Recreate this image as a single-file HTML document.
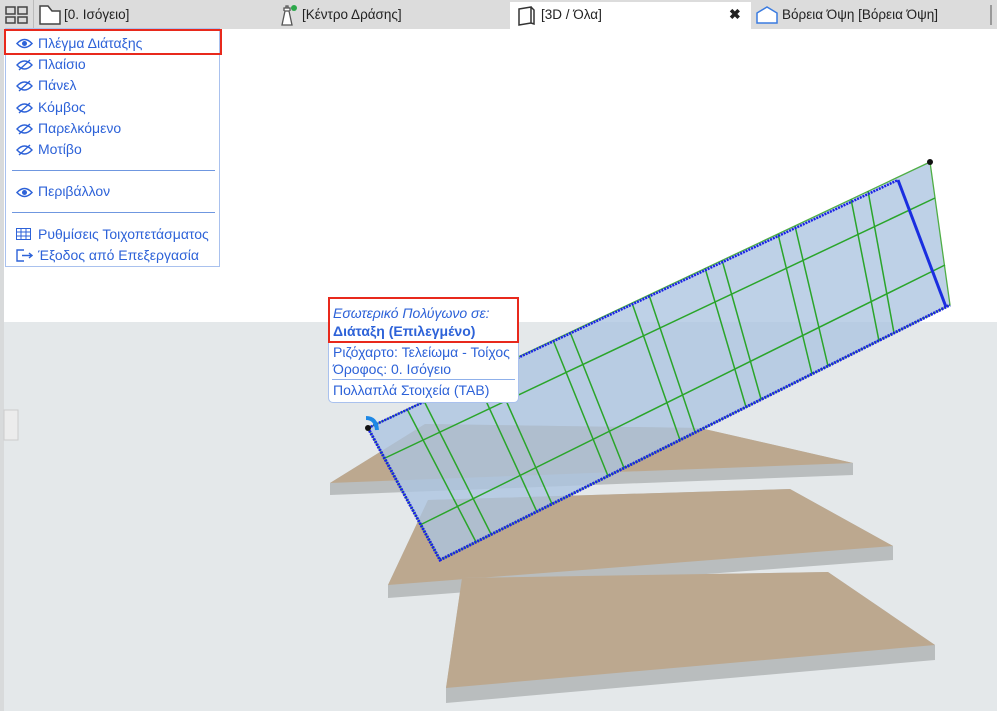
<!DOCTYPE html>
<html><head><meta charset="utf-8"><style>
*{margin:0;padding:0;box-sizing:border-box}
body{width:997px;height:711px;overflow:hidden;background:#fff;font-family:"Liberation Sans","Noto Sans CJK SC",sans-serif;position:relative}
.tabs{position:absolute;left:0;top:0;width:997px;height:29px;background:#dcdcdc;font-size:13.5px;color:#222}
.tab{position:absolute;top:7px;white-space:nowrap}
.menu{position:absolute;left:5px;top:28px;width:215px;height:239px;background:#fff;border:1px solid #a9c1ee;font-size:14px;color:#2d62d8}
.it{position:absolute;left:32px;white-space:nowrap}
.ic{position:absolute;left:10px}
.sep{position:absolute;left:6px;width:203px;height:1px;background:#6f97e0}
.red{position:absolute;border:2px solid #e8291c}
.tip{position:absolute;left:328px;top:297px;width:191px;height:106px;background:#fff;border:1px solid #a9c1ee;border-radius:5px;font-size:14px;color:#2d62d8}
.tip div{position:absolute;left:4px;white-space:nowrap}
</style></head><body>
<svg style="position:absolute;left:0;top:0" width="997" height="711">
<rect x="0" y="322" width="997" height="389" fill="#e4e8ea"/>
<rect x="0" y="29" width="4" height="682" fill="#d8dadb"/>
<rect x="4" y="410" width="14" height="30" fill="#ececec" stroke="#ccc"/>
<polygon points="330,483 425,424 700,428 853,463 853,475 330,495" fill="#b9bdbe"/>
<polygon points="330,483 425,424 700,428 853,463" fill="#bca88f"/>
<polygon points="388,585 428,500 790,489 893,546 893,560 388,598" fill="#b9bdbe"/>
<polygon points="388,585 428,500 790,489 893,546" fill="#bca88f"/>
<polygon points="446,688 462,578 828,572 935,645 935,660 446,703" fill="#b9bdbe"/>
<polygon points="446,688 462,578 828,572 935,645" fill="#bca88f"/>
<polygon points="368,428 930,162 950,305 440,560" fill="rgba(172,196,224,0.78)" stroke="#4fae45" stroke-width="1.3"/>
<g stroke="#2aa52a" stroke-width="1.5">
<line x1="407" y1="409" x2="476" y2="542"/><line x1="424" y1="401" x2="491" y2="534"/>
<line x1="475" y1="377" x2="537" y2="512"/><line x1="492" y1="369" x2="552" y2="504"/>
<line x1="553" y1="340" x2="608" y2="476"/><line x1="570" y1="332" x2="624" y2="468"/>
<line x1="632" y1="303" x2="680" y2="440"/><line x1="649" y1="295" x2="695" y2="432"/>
<line x1="705" y1="268" x2="746" y2="407"/><line x1="722" y1="260" x2="761" y2="399"/>
<line x1="778" y1="234" x2="812" y2="374"/><line x1="795" y1="226" x2="828" y2="366"/>
<line x1="851" y1="199" x2="879" y2="341"/><line x1="868" y1="191" x2="894" y2="333"/>
<line x1="383" y1="459" x2="935" y2="198"/><line x1="420" y1="525" x2="945" y2="265"/>
</g>
<line x1="898" y1="180" x2="946" y2="307" stroke="#1a2ee0" stroke-width="3"/>
<polyline points="368,428 440,560 950,305" fill="none" stroke="#1a22e6" stroke-width="3" stroke-dasharray="2 1"/>
<line x1="368" y1="428" x2="898" y2="180" stroke="#1a22e6" stroke-width="2.5" stroke-dasharray="2 1"/>
<circle cx="930" cy="162" r="3" fill="#111"/><circle cx="368" cy="428" r="3" fill="#111"/>
<path d="M366,418 q10,0 11,12" stroke="#1e88e5" stroke-width="4" fill="none"/>
</svg>
<div class="tabs">
<svg style="position:absolute;left:5px;top:6px" width="24" height="18"><g fill="none" stroke="#444" stroke-width="1.5"><rect x="1" y="1" width="9" height="7"/><rect x="13" y="1" width="9" height="7"/><rect x="1" y="11" width="9" height="6"/><rect x="13" y="11" width="9" height="6"/></g></svg>
<div style="position:absolute;left:33px;top:0;width:1px;height:29px;background:#bbb"></div>
<svg style="position:absolute;left:39px;top:5px" width="22" height="20"><path d="M1,1 h8 l4,5 h8 v13 h-20 z" fill="#fff" stroke="#444" stroke-width="1.5"/></svg>
<div class="tab" style="left:64px">[0. Ισόγειο]</div>
<svg style="position:absolute;left:277px;top:4px" width="20" height="22"><path d="M5,21 l3,-14 h4 l3,14 z M7,7 v-3 h6 v3 M9,4 v-2 h2 v2" fill="#fff" stroke="#555" stroke-width="1.3"/><circle cx="17" cy="4" r="3" fill="#2ca84a"/></svg>
<div class="tab" style="left:302px">[Κέντρο Δράσης]</div>
<div style="position:absolute;left:510px;top:2px;width:241px;height:27px;background:#fff"></div>
<svg style="position:absolute;left:517px;top:5px" width="20" height="22"><path d="M2,4 l12,-2 v16 l-12,2 z M14,2 l3,3 v14 l-3,-1" fill="none" stroke="#333" stroke-width="1.5"/></svg>
<div class="tab" style="left:541px">[3D / Όλα]</div>
<div class="tab" style="left:729px;font-weight:bold;font-size:14px;top:6px">✖</div>
<svg style="position:absolute;left:756px;top:6px" width="22" height="18"><path d="M1,7 l10,-6 l10,6 v10 h-20 z" fill="#fff" stroke="#3a7be0" stroke-width="1.5"/></svg>
<div class="tab" style="left:782px">Βόρεια Όψη [Βόρεια Όψη]</div>
<div style="position:absolute;left:990px;top:5px;width:2px;height:20px;background:#999"></div>
</div>
<div class="menu">
<svg class="ic" style="top:9px" width="17" height="11"><path d="M1,5.5 q7.5,-8 15,0 q-7.5,8 -15,0z" fill="none" stroke="#2d62d8" stroke-width="1.5"/><circle cx="8.5" cy="5.5" r="2.5" fill="#2d62d8"/></svg>
<div class="it" style="top:6px">Πλέγμα Διάταξης</div>
<svg class="ic" style="top:30px" width="17" height="12"><path d="M1,6 q7.5,-8 15,0 q-7.5,8 -15,0z M3,11 L14,1" fill="none" stroke="#2d62d8" stroke-width="1.4"/></svg>
<div class="it" style="top:27px">Πλαίσιο</div>
<svg class="ic" style="top:51px" width="17" height="12"><path d="M1,6 q7.5,-8 15,0 q-7.5,8 -15,0z M3,11 L14,1" fill="none" stroke="#2d62d8" stroke-width="1.4"/></svg>
<div class="it" style="top:48px">Πάνελ</div>
<svg class="ic" style="top:73px" width="17" height="12"><path d="M1,6 q7.5,-8 15,0 q-7.5,8 -15,0z M3,11 L14,1" fill="none" stroke="#2d62d8" stroke-width="1.4"/></svg>
<div class="it" style="top:70px">Κόμβος</div>
<svg class="ic" style="top:94px" width="17" height="12"><path d="M1,6 q7.5,-8 15,0 q-7.5,8 -15,0z M3,11 L14,1" fill="none" stroke="#2d62d8" stroke-width="1.4"/></svg>
<div class="it" style="top:91px">Παρελκόμενο</div>
<svg class="ic" style="top:115px" width="17" height="12"><path d="M1,6 q7.5,-8 15,0 q-7.5,8 -15,0z M3,11 L14,1" fill="none" stroke="#2d62d8" stroke-width="1.4"/></svg>
<div class="it" style="top:112px">Μοτίβο</div>
<div class="sep" style="top:141px"></div>
<svg class="ic" style="top:158px" width="17" height="11"><path d="M1,5.5 q7.5,-8 15,0 q-7.5,8 -15,0z" fill="none" stroke="#2d62d8" stroke-width="1.5"/><circle cx="8.5" cy="5.5" r="2.5" fill="#2d62d8"/></svg>
<div class="it" style="top:154px">Περιβάλλον</div>
<div class="sep" style="top:183px"></div>
<svg class="ic" style="top:199px" width="15" height="12"><rect x="0.5" y="0.5" width="14" height="11" fill="none" stroke="#2d62d8"/><path d="M0,4 h15 M0,8 h15 M5,0 v12 M10,0 v12" stroke="#2d62d8"/></svg>
<div class="it" style="top:197px">Ρυθμίσεις Τοιχοπετάσματος</div>
<svg class="ic" style="top:220px" width="17" height="13"><path d="M8,1 h-7 v11 h7 M6,6.5 h10 M13,4 l3,2.5 l-3,2.5" fill="none" stroke="#2d62d8" stroke-width="1.4"/></svg>
<div class="it" style="top:218px">Έξοδος από Επεξεργασία</div>
</div>
<div class="red" style="left:4px;top:29px;width:218px;height:26px"></div>
<div class="tip">
<div style="top:7px;font-style:italic">Εσωτερικό Πολύγωνο σε:</div>
<div style="top:25px;font-weight:bold">Διάταξη (Επιλεγμένο)</div>
<div style="top:46px">Ριζόχαρτο: Τελείωμα - Τοίχος</div>
<div style="top:63px">Όροφος: 0. Ισόγειο</div>
<div style="top:81px;left:3px;width:183px;height:1px;background:#8fb0ea"></div>
<div style="top:84px">Πολλαπλά Στοιχεία (TAB)</div>
</div>
<div class="red" style="left:328px;top:297px;width:191px;height:46px"></div>
</body></html>
